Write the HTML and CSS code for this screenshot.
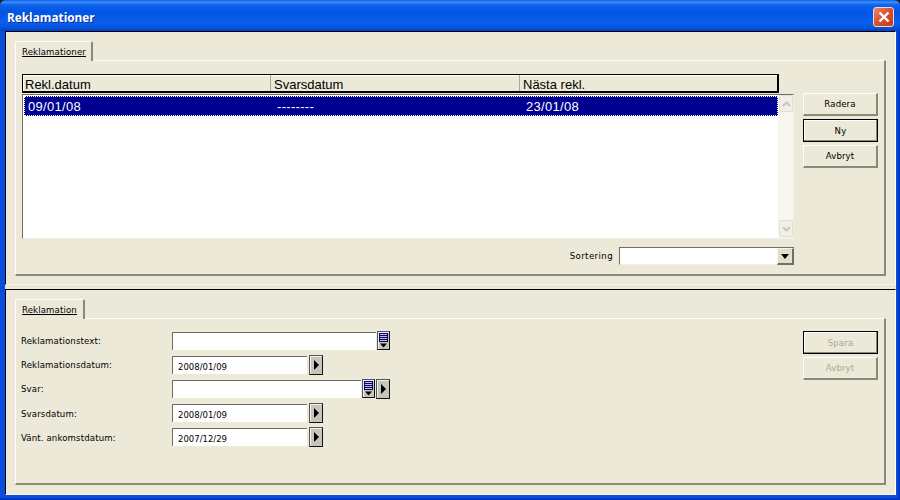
FILE: index.html
```html
<!DOCTYPE html>
<html lang="en">
<head>
  <meta charset="UTF-8">
  <title>Reklamationer</title>
  <link rel="stylesheet" href="styles.css">
</head>
<body>
  <div class="window">
    <div class="titlebar">
      <span class="title">Reklamationer</span>
      <div class="close">
        <svg width="12" height="12" viewBox="0 0 12 12"><path d="M1.5 1.5 L10.5 10.5 M10.5 1.5 L1.5 10.5" stroke="#fff" stroke-width="2.4" fill="none"/></svg>
      </div>
    </div>

    <div class="panel panel-top">
      <div class="tabs"><div class="tab tab-list"><u>Reklamationer</u></div></div>
      <div class="pane pane-list">
        <div class="list-col">
          <div class="list-head">
            <div class="col col-1">Rekl.datum</div>
            <div class="col col-2">Svarsdatum</div>
            <div class="col col-3">Nästa rekl.</div>
          </div>
          <div class="list">
            <div class="rows">
              <div class="row">
                <div class="col-1 cell">09/01/08</div>
                <div class="col-2 cell">--------</div>
                <div class="col-3 cell">23/01/08</div>
              </div>
            </div>
            <div class="scrollbar">
              <div class="scroll-btn">
                <svg width="9" height="6" viewBox="0 0 9 6"><path d="M1 5 L4.5 1.5 L8 5" stroke="#c9c9bd" stroke-width="2" fill="none"/></svg>
              </div>
              <div class="scroll-btn">
                <svg width="9" height="6" viewBox="0 0 9 6"><path d="M1 1 L4.5 4.5 L8 1" stroke="#c9c9bd" stroke-width="2" fill="none"/></svg>
              </div>
            </div>
          </div>
          <div class="sort">
            <span class="sort-label">Sortering</span>
            <div class="combo">
              <div class="combo-btn">
                <svg width="8" height="5" viewBox="0 0 8 5"><path d="M0 0 H8 L4 5 Z" fill="#000"/></svg>
              </div>
            </div>
          </div>
        </div>
        <div class="btn-col">
          <div class="btn">Radera</div>
          <div class="btn btn-default">Ny</div>
          <div class="btn">Avbryt</div>
        </div>
      </div>
    </div>

    <div class="panel panel-bottom">
      <div class="tabs"><div class="tab tab-form"><u>Reklamation</u></div></div>
      <div class="pane pane-form">
        <div class="form">
          <div class="form-row">
            <label>Reklamationstext:</label>
            <div class="field field-long"></div>
            <div class="icon-btn icon-list">
              <svg width="9" height="15" viewBox="0 0 9 15"><path d="M1 0.5 H8 M1 2.5 H8 M1 4.5 H8 M1 6.5 H8 M1 8.5 H8 M0.5 0 V9 M8.5 0 V9" stroke="#000080" fill="none"/><path d="M1 10.5 H8 L4.5 14.5 Z" fill="#000"/></svg>
            </div>
          </div>
          <div class="form-row">
            <label>Reklamationsdatum:</label>
            <div class="field field-date">2008/01/09</div>
            <div class="icon-btn icon-arrow">
              <svg width="7" height="10" viewBox="0 0 7 10"><path d="M1 0 L6 5 L1 10 Z" fill="#000"/></svg>
            </div>
          </div>
          <div class="form-row">
            <label>Svar:</label>
            <div class="field field-mid"></div>
            <div class="icon-btn icon-list">
              <svg width="9" height="15" viewBox="0 0 9 15"><path d="M1 0.5 H8 M1 2.5 H8 M1 4.5 H8 M1 6.5 H8 M1 8.5 H8 M0.5 0 V9 M8.5 0 V9" stroke="#000080" fill="none"/><path d="M1 10.5 H8 L4.5 14.5 Z" fill="#000"/></svg>
            </div>
            <div class="icon-btn icon-arrow icon-tight">
              <svg width="7" height="10" viewBox="0 0 7 10"><path d="M1 0 L6 5 L1 10 Z" fill="#000"/></svg>
            </div>
          </div>
          <div class="form-row">
            <label class="label-low">Svarsdatum:</label>
            <div class="field field-date">2008/01/09</div>
            <div class="icon-btn icon-arrow">
              <svg width="7" height="10" viewBox="0 0 7 10"><path d="M1 0 L6 5 L1 10 Z" fill="#000"/></svg>
            </div>
          </div>
          <div class="form-row">
            <label class="label-low">Vänt. ankomstdatum:</label>
            <div class="field field-date">2007/12/29</div>
            <div class="icon-btn icon-arrow">
              <svg width="7" height="10" viewBox="0 0 7 10"><path d="M1 0 L6 5 L1 10 Z" fill="#000"/></svg>
            </div>
          </div>
        </div>
        <div class="btn-col">
          <div class="btn btn-default btn-disabled">Spara</div>
          <div class="btn btn-disabled">Avbryt</div>
        </div>
      </div>
    </div>
  </div>
</body>
</html>
```

FILE: styles.css
```css
* {
  box-sizing: border-box;
}

body {
  margin: 0;
  background-color: #222;
  font-family: "DejaVu Sans", sans-serif;
  font-size: 8.6px;
  letter-spacing: 0.12px;
  color: #000;
}

.window {
  width: 900px;
  height: 500px;
  padding: 0 4px 5px 5px;
  border-radius: 6px 6px 0 0;
  background-color: #0a4ee0;
  box-shadow: inset -2px -2px 0 #0036c8;
  display: flex;
  flex-direction: column;
  overflow: hidden;
}

.titlebar {
  height: 31px;
  margin: 0 -4px 0 -5px;
  padding: 2px 6px 0 7px;
  flex-shrink: 0;
  background: linear-gradient(#0a5ae6 0, #3b8ffb 2px, #0f62ea 5px, #0055e5 12px, #0a60ee 22px, #0653dc 28px, #0040c4 31px);
  display: flex;
  align-items: center;
  justify-content: space-between;
}

.title {
  font-family: "Open Sans", sans-serif;
  font-weight: 700;
  font-size: 11.8px;
  letter-spacing: 0;
  color: #fff;
  text-shadow: 1px 1px 0 #0a2f9c;
}

.close {
  width: 21px;
  height: 20px;
  border: 1px solid #f0d8d0;
  border-radius: 3px;
  background: linear-gradient(135deg, #e88a70, #d8502c 50%, #c83a18);
  display: flex;
  align-items: center;
  justify-content: center;
}

.panel {
  background-color: #ece9d8;
  border-top: 1px solid #000;
  border-left: 1px solid #000;
  border-right: 1px solid #fff;
  border-bottom: 1px solid #f7f5ea;
  padding: 9px 9px 0 9px;
  display: flex;
  flex-direction: column;
}

.panel-top {
  height: 254px;
  margin-bottom: 4px;
  box-shadow: 0 4px 0 #ece9d8;
}

.panel-bottom {
  height: 206px;
}

.tabs {
  height: 19px;
  display: flex;
}

.tab {
  height: 20px;
  padding: 5px 0 0 6px;
  background-color: #ece9d8;
  border-top: 1px solid #fff;
  border-left: 1px solid #fff;
  border-right: 2px solid #8a8a78;
  border-radius: 2px 2px 0 0;
  position: relative;
  z-index: 1;
}

.tab-list {
  width: 78px;
}

.tab-form {
  width: 70px;
}

.pane {
  border-top: 1px solid #fff;
  border-left: 1px solid #fff;
  border-right: 2px solid #8a8a78;
  border-bottom: 2px solid #8a8a78;
  display: flex;
  justify-content: space-between;
}

.pane-list {
  height: 216px;
  padding: 13px 6px 0 6px;
}

.pane-form {
  height: 167px;
  padding: 12px 6px 0 5px;
}

.list-col {
  width: 772px;
}

.list-head {
  width: 757px;
  height: 19px;
  border: 1px solid #000;
  border-bottom-width: 2px;
  border-right-width: 2px;
  box-shadow: inset 1px 1px 0 #fff;
  display: flex;
  font-family: "Liberation Sans", sans-serif;
  font-size: 13px;
  letter-spacing: 0;
}

.col {
  padding: 2px 0 0 3px;
  border-right: 1px solid #aca899;
  white-space: nowrap;
}

.col-1 {
  width: 248px;
  padding-left: 2px;
}

.col-2 {
  width: 249px;
}

.col-3 {
  flex: 1;
  border-right: none;
}

.list {
  height: 145px;
  margin-top: 1px;
  background-color: #fff;
  border-top: 1px solid #716f64;
  border-left: 1px solid #716f64;
  border-right: 1px solid #f1efe2;
  border-bottom: 1px solid #f1efe2;
  display: flex;
}

.rows {
  flex: 1;
  padding: 1px 0 0 1px;
}

.row {
  height: 20px;
  background-color: #000090;
  border: 1px dotted #fff;
  color: #fff;
  font-family: "Liberation Sans", sans-serif;
  font-size: 13px;
  letter-spacing: 0.3px;
  display: flex;
  align-items: center;
}

.row .col-1 {
  width: 249px;
}

.cell {
  padding-left: 3px;
  white-space: nowrap;
}

.scrollbar {
  width: 15px;
  background-color: #f7f6ef;
  display: flex;
  flex-direction: column;
  justify-content: space-between;
  padding: 0 0 1px 1px;
}

.scroll-btn {
  height: 17px;
  background-color: #f1f0e6;
  border: 1px solid #e0dfd2;
  border-radius: 2px;
  display: flex;
  align-items: center;
  justify-content: center;
}

.sort {
  margin-top: 8px;
  display: flex;
  justify-content: flex-end;
  align-items: center;
  gap: 6px;
}

.sort-label {
  letter-spacing: 0.4px;
}

.combo {
  width: 175px;
  height: 18px;
  background-color: #fff;
  border-top: 1px solid #716f64;
  border-left: 1px solid #716f64;
  border-bottom: 1px solid #f1efe2;
  display: flex;
  justify-content: flex-end;
}

.combo-btn {
  width: 17px;
  margin-bottom: -1px;
  background-color: #e2dfce;
  border-top: 1px solid #f4f3ea;
  border-left: 1px solid #f4f3ea;
  border-right: 2px solid #716f64;
  border-bottom: 2px solid #716f64;
  display: flex;
  align-items: center;
  justify-content: center;
}

.btn-col {
  width: 75px;
  display: flex;
  flex-direction: column;
  gap: 3px;
  padding-top: 19px;
}

.pane-form .btn-col {
  padding-top: 0;
}

.btn {
  height: 23px;
  background-color: #ece9d8;
  border-top: 1px solid #fff;
  border-left: 1px solid #fff;
  border-right: 2px solid #8a8a78;
  border-bottom: 2px solid #8a8a78;
  display: flex;
  align-items: center;
  justify-content: center;
}

.btn-default {
  border: 1px solid #000;
  box-shadow: inset -1px -1px 0 #8a8a78, inset 1px 1px 0 #fff;
}

.btn-disabled {
  color: #aca899;
}

.form {
  margin-top: 1px;
  display: flex;
  flex-direction: column;
  gap: 6px;
}

.form-row {
  height: 18px;
  display: flex;
  align-items: flex-start;
}

.form-row label {
  width: 151px;
  padding-top: 4px;
}

.form-row .label-low {
  padding-top: 5px;
}

.field {
  height: 18px;
  padding: 5px 0 0 5px;
  background-color: #fff;
  border-top: 1px solid #716f64;
  border-left: 1px solid #716f64;
  font-size: 8.5px;
  letter-spacing: 0;
}

.field-long {
  width: 204px;
}

.field-mid {
  width: 189px;
}

.field-date {
  width: 135px;
}

.icon-btn {
  margin-top: -1px;
  flex-shrink: 0;
  background-color: #c6c5ba;
  border: 1px solid #111;
  border-left-color: #555;
  border-top-color: #555;
  box-shadow: inset 1px 1px 0 #f2f2ec;
  display: flex;
  align-items: center;
  justify-content: center;
}

.icon-list {
  width: 13px;
  height: 19px;
  margin-left: 1px;
}

.icon-arrow {
  width: 14px;
  height: 20px;
  margin-left: 2px;
}

.icon-tight {
  margin-left: 1px;
}
```
